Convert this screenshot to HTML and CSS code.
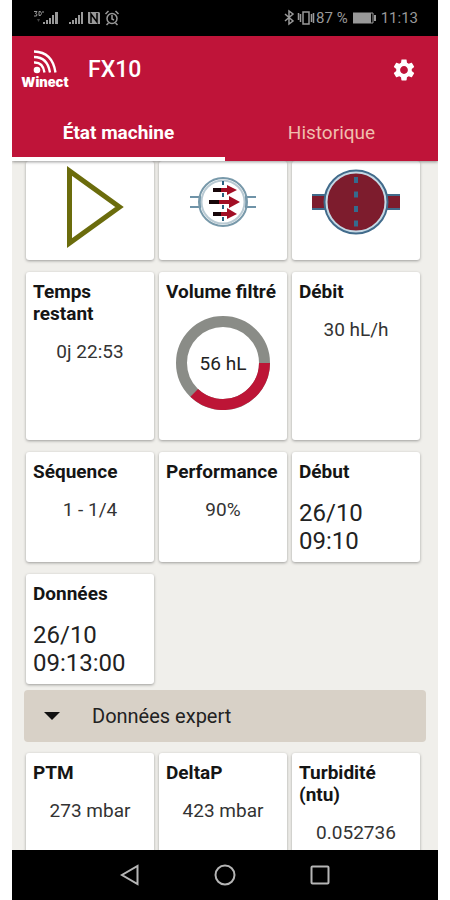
FILE: index.html
```html
<!DOCTYPE html>
<html lang="fr">
<head>
<meta charset="utf-8">
<meta name="viewport" content="width=device-width, initial-scale=1">
<title>Winect FX10</title>
<link rel="stylesheet" href="styles.css">
</head>
<body>
<div class="phone">
  <div class="status">
    <div class="status-group">
      <svg width="88" height="18" viewBox="0 0 88 18" fill="#999" aria-hidden="true">
        <g fill="none" stroke="#999"><path d="M2 2.500h3L3.500 4.500Q6 5 4.500 7H2M7 2.500v4h1.500q2-2 0-4zM11 4V2"/></g>
        <path d="M5 10h3l-1.500 3z" fill="#444"/>
        <path d="M11 13h2v2h-2zM14 11h2v4h-2zM17 9h2v6h-2zM20 6h2v9h-2zM23 3h3v12h-3z"/>
        <path d="M37 13h2v2h-2zM40 11h2v4h-2zM43 9h2v6h-2zM46 6h2v9h-2zM49 3h2v12h-2z"/>
        <path d="M56 3h11l1 1v11H57l-1-1z"/>
        <path d="M59 14V5l6 8V4" fill="none" stroke="#000" stroke-width="1.500"/>
        <g fill="none" stroke="#999" stroke-width="1.500"><circle cx="80" cy="9.500" r="5"/><path d="M80 6v4l2 1M73.500 5l3-3M86.500 5l-3-3M76.500 14l-2 2M83.500 14l2 2"/></g>
      </svg>
    </div>
    <div class="status-group">
      <svg width="32" height="18" viewBox="0 0 32 18" fill="none" stroke="#999" stroke-width="1.500" aria-hidden="true">
        <path d="M1 5l8 7-4 3V2l4 3-8 7"/>
        <path d="M19 3h6v12h-6zM16.500 5v8M14.500 4v7M27.500 5v8M29.500 4v10"/>
      </svg>
      <span>87 %</span>
      <svg class="battery" width="25" height="14" viewBox="0 0 25 14" aria-hidden="true"><path d="M1 1.500h18v11H1z" fill="#999"/><path d="M19 2h2v10h-2" fill="none" stroke="#999"/><path d="M22 4h2v6h-2z" fill="#999"/></svg>
      <span>11:13</span>
    </div>
  </div>
  <header class="header">
    <div class="toolbar">
      <div class="brand">
        <svg width="26" height="24" viewBox="0 0 26 24" fill="none" stroke="#fff" stroke-width="2.300" aria-hidden="true"><circle cx="5" cy="20" r="3.300" fill="#fff" stroke="none"/><path d="M2 12.500Q11 12 12.500 22.500M2 7Q15.500 7 18 22.500M2 1.500Q20.500 2 23.500 22.500"/></svg>
        <span>Winect</span>
      </div>
      <h1>FX10</h1>
      <button class="settings" aria-label="Paramètres"><svg width="26" height="26" viewBox="0 0 24 24" fill="#fff"><path d="M19.140 12.940c.04-.3.06-.61.06-.94 0-.32-.02-.64-.07-.94l2.030-1.580c.18-.14.23-.41.12-.61l-1.920-3.320c-.12-.22-.37-.29-.59-.22l-2.390.96c-.5-.38-1.030-.7-1.620-.94l-.36-2.540c-.04-.24-.24-.41-.48-.41h-3.840c-.24 0-.43.17-.47.41l-.36 2.540c-.59.24-1.130.57-1.620.94l-2.390-.96c-.22-.08-.47 0-.59.22L2.740 8.870c-.12.21-.08.47.12.61l2.030 1.580c-.05.3-.09.63-.09.94s.02.64.07.94l-2.030 1.580c-.18.14-.23.41-.12.61l1.920 3.320c.12.22.37.29.59.22l2.390-.96c.5.38 1.030.7 1.620.94l.36 2.540c.05.24.24.41.48.41h3.840c.24 0 .44-.17.47-.41l.36-2.540c.59-.24 1.130-.56 1.620-.94l2.390.96c.22.08.47 0 .59-.22l1.920-3.320c.12-.22.07-.47-.12-.61l-2.010-1.580zM12 15.600c-1.980 0-3.600-1.620-3.600-3.600s1.620-3.600 3.600-3.600 3.600 1.620 3.600 3.600-1.620 3.600-3.600 3.600z"/></svg></button>
    </div>
    <nav class="tabs"><a class="tab active" href="#etat">État machine</a><a class="tab" href="#historique">Historique</a></nav>
  </header>
  <main class="content" id="etat">
    <div class="grid">
      <section class="card picture">
        <svg width="70" height="86" viewBox="0 0 70 86" aria-label="Marche"><path d="M14.500 7v72L64.500 43z" fill="none" stroke="#6b6c0c" stroke-width="5"/></svg>
      </section>
      <section class="card picture">
        <svg width="70" height="86" viewBox="0 0 70 86" aria-label="Filtration">
          <g fill="none" stroke="#6f93a8" stroke-width="2"><path d="M2 33h10v10H2M68 33H58v10h10"/><circle cx="35" cy="38" r="24" stroke="#7899aa"/><circle cx="35" cy="38" r="21.500" stroke="#b9cad3"/><path d="M35 17v44" stroke="#286080" stroke-dasharray="4 8"/></g>
          <path d="M25 24h12v4H25zM21 36h12v4H21zM25 48h12v4H25z" fill="#170609"/>
          <path d="M33 24h6v-3l10 5-10 5v-3h-6zM31 36h10v-4l11 6-11 6v-4H31zM33 48h6v-4l10 6-10 5v-3h-6z" fill="#a20e25"/>
        </svg>
      </section>
      <section class="card picture">
        <svg width="90" height="86" viewBox="0 0 90 86" aria-label="Vanne">
          <path d="M1 31h88v14H1z" fill="#7d1c2d"/><path d="M1 31h88M1 45h88" stroke="#416b8b" stroke-width="2"/>
          <circle cx="45" cy="38" r="31" fill="#7d1c2d" stroke="#416b8b" stroke-width="3"/><circle cx="45" cy="38" r="29.500" fill="none" stroke="#c6d9e5" stroke-width="2"/>
          <path d="M45 13v50" stroke="#356b8e" stroke-width="4" stroke-dasharray="6 8.500"/>
        </svg>
      </section>
      <section class="card tall"><h2>Temps restant</h2><p>0j 22:53</p></section>
      <section class="card tall"><h2>Volume filtré</h2>
        <div class="gauge">
          <svg width="94" height="94" viewBox="0 0 94 94" fill="none" stroke-width="11" aria-hidden="true"><circle cx="47" cy="47" r="41.500" stroke="#8a8c87"/><path d="M88.500 47A41.500 41.500 0 0 1 18.200 76.900" stroke="#bd1536"/></svg>
          <span>56 hL</span>
        </div>
      </section>
      <section class="card tall"><h2>Débit</h2><p>30 hL/h</p></section>
      <section class="card"><h2>Séquence</h2><p>1 - 1/4</p></section>
      <section class="card"><h2>Performance</h2><p>90%</p></section>
      <section class="card"><h2>Début</h2><p class="date">26/10<br>09:10</p></section>
      <section class="card"><h2>Données</h2><p class="date">26/10<br>09:13:00</p></section>
    </div>
    <button class="expert"><svg width="16" height="8" viewBox="0 0 16 8" aria-hidden="true"><path d="M0 0h16L8 8z" fill="#111"/></svg><span>Données expert</span></button>
    <div class="grid">
      <section class="card"><h2>PTM</h2><p>273 mbar</p></section>
      <section class="card"><h2>DeltaP</h2><p>423 mbar</p></section>
      <section class="card"><h2>Turbidité (ntu)</h2><p>0.052736</p></section>
    </div>
  </main>
  <footer class="navbar">
    <button aria-label="Retour"><svg width="22" height="22" viewBox="0 0 22 22"><path d="M18.500 2v18L3 11z"/></svg></button>
    <button aria-label="Accueil"><svg width="22" height="22" viewBox="0 0 22 22"><circle cx="11" cy="11" r="9.500"/></svg></button>
    <button aria-label="Applications"><svg width="22" height="22" viewBox="0 0 22 22"><rect x="2.500" y="2.500" width="17" height="17" rx="1"/></svg></button>
  </footer>
</div>
</body>
</html>
```
FILE: styles.css
```css
* { box-sizing: border-box; }
body { margin: 0; background: #fff; color: #151515; font-family: Roboto, "Liberation Sans", sans-serif; }
h1, h2, p { margin: 0; }
button { padding: 0; border: 0; background: none; font: inherit; color: inherit; }
svg { display: block; flex: none; }

.phone { display: flex; flex-direction: column; height: 100vh; margin: 0 12px; background: #f0efeb; overflow: hidden; }

.status { flex: none; display: flex; justify-content: space-between; height: 36px; padding: 0 20px; background: #000; color: #999; font-size: 15px; }
.status-group { display: flex; align-items: center; }
.battery { margin: 0 4px; }

.header { position: relative; z-index: 1; flex: none; background: #bf1439; color: #fff; box-shadow: 0 1px 3px rgba(0, 0, 0, .4); }
.toolbar { display: flex; align-items: center; height: 68px; padding: 0 21px 0 8px; }
.brand { display: flex; flex-direction: column; align-items: center; width: 50px; font-family: Inter, sans-serif; font-size: 13px; line-height: 16px; font-weight: 900; }
h1 { margin-left: 18px; font-size: 23px; line-height: 28px; font-weight: 500; }
.settings { margin-left: auto; }
.tabs { display: grid; grid-template-columns: 1fr 1fr; }
.tab { height: 57px; padding-top: 17px; border-bottom: 4px solid transparent; color: #f0bfae; font-size: 19px; line-height: 24px; font-weight: 400; text-align: center; text-decoration: none; }
.tab.active { border-color: #fff; color: #fff; font-weight: 700; }

.content { flex: 1; min-height: 0; overflow: hidden; }
.grid { display: grid; grid-template-columns: repeat(3, 1fr); gap: 12px 5px; padding: 0 18px 0 14px; }
.card { min-height: 110px; padding: 9px 7px 7px; border-radius: 3px; background: #fff; box-shadow: 0 1px 3px rgba(0, 0, 0, .35); }
.card.picture { display: flex; justify-content: center; min-height: 99px; padding: 3px 0 0; }
.card.tall { min-height: 168px; }
h2 { font-size: 19px; line-height: 22px; font-weight: 700; }
.card p { margin-top: 16px; color: #333; font-size: 19px; line-height: 22px; text-align: center; }
.card .date { color: #222; font-size: 24px; line-height: 28px; text-align: left; }
.gauge { display: grid; place-items: center; margin-top: 13px; color: #222; font-size: 19px; }
.gauge > * { grid-area: 1 / 1; }

.expert { display: flex; align-items: center; gap: 32px; width: calc(100% - 24px); height: 52px; margin: 6px 12px 11px; padding: 0 20px; border-radius: 4px; background: #d8d1c7; color: #222; font-size: 20px; }

.navbar { flex: none; display: flex; justify-content: center; align-items: center; gap: 73px; height: 50px; background: #000; }
.navbar svg { fill: none; stroke: #b5b5b5; stroke-width: 2; }
```
